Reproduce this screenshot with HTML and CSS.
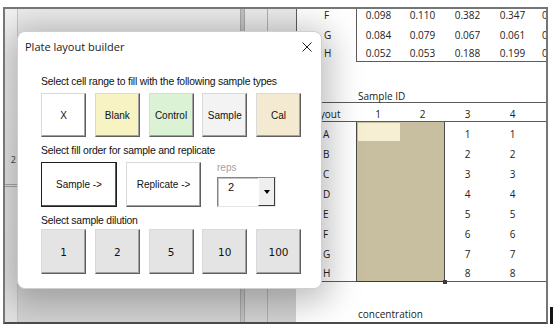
FILE: index.html
```html
<!DOCTYPE html>
<html>
<head>
<meta charset="utf-8">
<title>Plate layout builder</title>
<link rel="stylesheet" href="styles.css">
</head>
<body>
<div class="frame">
  <div class="sheet">
    <div class="left">
      <div class="gutter"><span class="rownum">2</span><span class="gline"></span></div>
      <div class="colA"></div>
      <div class="band"></div>
      <div class="colB"></div>
      <div class="colC"></div>
    </div>
    <div class="grid">
      <div class="row r-top top3"><div class="lbl">F</div><div class="v c1">0.098</div><div class="v">0.110</div><div class="v">0.382</div><div class="v">0.347</div><div class="c5">0</div></div>
      <div class="row r-mid top3"><div class="lbl">G</div><div class="v c1">0.084</div><div class="v">0.079</div><div class="v">0.067</div><div class="v">0.061</div><div class="c5">0</div></div>
      <div class="row r-mid top3 line-b"><div class="lbl nob">H</div><div class="v c1">0.052</div><div class="v">0.053</div><div class="v">0.188</div><div class="v">0.199</div><div class="c5">0</div></div>
      <div class="row"><div></div><div></div><div></div><div></div><div></div><div></div></div>
      <div class="row r-bot0 line-all"><div></div><div class="txt">Sample ID</div><div></div><div></div><div></div><div></div></div>
      <div class="row r-bot1 line-all"><div class="lbl layout">Layout</div><div class="v">1</div><div class="v">2</div><div class="v">3</div><div class="v">4</div><div></div></div>
      <div class="row r-bot2"><div class="lbl">A</div><div class="sel s1 active"></div><div class="sel s2"></div><div class="v">1</div><div class="v">1</div><div></div></div>
      <div class="row r-bot2"><div class="lbl">B</div><div class="sel s1"></div><div class="sel s2"></div><div class="v">2</div><div class="v">2</div><div></div></div>
      <div class="row r-bot2"><div class="lbl">C</div><div class="sel s1"></div><div class="sel s2"></div><div class="v">3</div><div class="v">3</div><div></div></div>
      <div class="row r-bot2"><div class="lbl">D</div><div class="sel s1"></div><div class="sel s2"></div><div class="v">4</div><div class="v">4</div><div></div></div>
      <div class="row r-bot2"><div class="lbl">E</div><div class="sel s1"></div><div class="sel s2"></div><div class="v">5</div><div class="v">5</div><div></div></div>
      <div class="row r-bot2"><div class="lbl">F</div><div class="sel s1"></div><div class="sel s2"></div><div class="v">6</div><div class="v">6</div><div></div></div>
      <div class="row r-bot2"><div class="lbl">G</div><div class="sel s1"></div><div class="sel s2"></div><div class="v">7</div><div class="v">7</div><div></div></div>
      <div class="row r-bot2 line-all last"><div class="lbl">H</div><div class="sel s1"></div><div class="sel s2 handle"></div><div class="v">8</div><div class="v">8</div><div></div></div>
      <div class="row"><div></div><div></div><div></div><div></div><div></div><div></div></div>
      <div class="row r-mid"><div></div><div class="txt">concentration</div><div></div><div></div><div></div><div></div></div>
    </div>
  </div>

  <div class="dialog">
    <div class="dlg-head">
      <span class="dlg-title">Plate layout builder</span>
      <svg class="close" width="10" height="10" viewBox="0 0 10 10"><path d="M0.5 0.5L9.5 9.5M9.5 0.5L0.5 9.5" stroke="#222" stroke-width="1" fill="none"/></svg>
    </div>
    <div class="dlg-body">
      <div class="label first">Select cell range to fill with the following sample types</div>
      <div class="btn-row">
        <div class="btn b-x">X</div>
        <div class="btn b-blank">Blank</div>
        <div class="btn b-control">Control</div>
        <div class="btn b-sample">Sample</div>
        <div class="btn b-cal">Cal</div>
      </div>
      <div class="label">Select fill order for sample and replicate</div>
      <div class="btn-row order">
        <div class="btn wide default">Sample -&gt;</div>
        <div class="btn wide b-x">Replicate -&gt;</div>
        <div class="reps">
          <div class="reps-label">reps</div>
          <div class="combo">
            <span class="combo-val">2</span>
            <span class="combo-btn"><span class="tri"></span></span>
          </div>
        </div>
      </div>
      <div class="label">Select sample dilution</div>
      <div class="btn-row dil">
        <div class="btn b-dil">1</div>
        <div class="btn b-dil">2</div>
        <div class="btn b-dil">5</div>
        <div class="btn b-dil">10</div>
        <div class="btn b-dil">100</div>
      </div>
    </div>
  </div>
</div>
<div class="edge"></div>
</body>
</html>
```

FILE: styles.css
```css
html, body { margin: 0; padding: 0; background: #fff; }
body {
  display: flex;
  align-items: flex-start;
  padding: 7px 0 0 3px;
  gap: 2px;
}
.edge { width: 3px; height: 17px; background: #151515; margin-top: 300px; }

.frame {
  position: relative;
  width: 541px;
  height: 313px;
  border: 2px solid #767676;
  border-bottom-color: #4a4a4a;
  overflow: hidden;
  background: #fff;
}
.sheet { display: flex; height: 313px; }

/* left, greyed-out part of the worksheet */
.left {
  width: 291px;
  display: flex;
  background: linear-gradient(180deg, #ececec 0%, #dedede 45%, #d3d3d3 100%);
}
.gutter {
  width: 12px;
  border-right: 1px solid #c6c6c6;
  background: rgba(255,255,255,0.35);
  display: flex;
  flex-direction: column;
  align-items: flex-end;
  font: 9px "Open Sans", sans-serif;
  color: #444;
}
.rownum { margin-top: 145px; line-height: 12px; padding-right: 1px; }
.gline { align-self: stretch; margin-top: 18px; height: 1px; border-top: 1px solid #a8a8a8; border-bottom: 1px solid #a8a8a8; }
.colA { width: 222px; }
.band { width: 3px; background: #c3c3c3; border-left: 1px solid #a9a9a9; border-right: 1px solid #a9a9a9; }
.colB { width: 22px; border-right: 1px solid #b0b0b0; }
.colC { width: 28px; }

/* right worksheet grid */
.grid {
  width: 250px;
  display: grid;
  grid-template-columns: 60px 44px 45px 45px 45px 11px;
  grid-template-rows: 16px 19px 18px 21px 20px 19px repeat(8, 20px) 23px 17px;
  font: 10px "Open Sans", sans-serif;
  color: #222;
}
.row { display: contents; }
.row > div {
  box-sizing: border-box;
  display: flex;
  align-items: flex-end;
  line-height: 12px;
  white-space: nowrap;
  min-width: 0;
}
.r-top > div { align-items: flex-start; }
.r-mid > div { align-items: center; }
.r-bot0 > div { padding-bottom: 0; }
.r-bot1 > div { padding-bottom: 1px; }
.r-bot2 > div { padding-bottom: 2px; }

.v { justify-content: center; }
.lbl { padding-left: 27px; }
.lbl.layout { padding-left: 13px; }
.txt { padding-left: 2px; }
.c5 { overflow: hidden; padding-left: 7px; }

.top3 > .lbl { border-left: 1px solid #5c5c5c; }
.top3 > .c1 { border-left: 1px solid #5c5c5c; }
.line-b > div:not(.nob) { border-bottom: 1px solid #5c5c5c; }
.line-all > div { border-bottom: 1px solid #5c5c5c; }

/* selected range */
.sel { background: #c8bfa0; }
.s1 { border-left: 1px solid #4a4a4a; }
.s2 { border-right: 1px solid #4a4a4a; }
.last > .sel { border-bottom: 1px solid #3a3a3a; }
.active { box-shadow: inset 1px 1px 0 #c8bfa0, inset 0 -1px 0 #c8bfa0; background: #f7efd3; }
.handle { position: relative; }
.handle::after {
  content: "";
  position: absolute;
  right: -3px;
  bottom: -3px;
  width: 4px;
  height: 4px;
  background: #3a3a3a;
}

/* dialog */
.dialog {
  position: absolute;
  left: 12px;
  top: 22px;
  width: 305px;
  box-sizing: border-box;
  background: #fff;
  border: 1px solid #cfcfcf;
  border-radius: 8px;
  box-shadow: 0 6px 34px 8px rgba(0,0,0,0.26);
  z-index: 2;
  font-family: "Liberation Sans", Arial, sans-serif;
  color: #111;
}
.dlg-head {
  height: 29px;
  display: flex;
  align-items: center;
  justify-content: space-between;
  padding: 0 9px 0 7px;
}
.dlg-title { font: 11px "Open Sans", sans-serif; color: #1a1a1a; }
.close { display: block; }
.dlg-body { padding: 0 0 14px 23px; }
.label { font-size: 10.4px; letter-spacing: -0.2px; line-height: 14px; margin-top: 7px; }
.label.first { margin-top: 14px; }
.btn-row { display: flex; gap: 8.75px; margin-top: 4px; }
.btn-row.dil { margin-top: 1px; }
.btn-row.order { gap: 9px; align-items: flex-start; }

.btn {
  width: 45px;
  height: 44px;
  box-sizing: border-box;
  display: flex;
  align-items: center;
  justify-content: center;
  border: 1px solid;
  border-color: #d9d9d9 #5f5f5f #5f5f5f #d9d9d9;
  box-shadow: inset -1px -1px 0 #a2a2a2;
  font-size: 10px;
}
.b-x { background: #fff; }
.b-blank { background: #f7f3c3; }
.b-control { background: #dbf2d5; }
.b-sample { background: #f3f3f3; }
.b-cal { background: #f4ead1; }
.btn.wide { width: 75px; height: 45px; }
.btn.default {
  width: 76px;
  background: #fff;
  border-color: #1e1e1e;
  box-shadow: inset -1px -1px 0 #5a5a5a;
}
.b-dil { background: #e4e4e4; font: 10.5px "DejaVu Sans", sans-serif; height: 45px; }

.reps { width: 59px; margin-left: 7px; }
.reps-label { font-size: 10px; line-height: 12px; color: #a3a3a3; }
.combo {
  margin-top: 3px;
  height: 30px;
  box-sizing: border-box;
  display: flex;
  border: 1px solid;
  border-color: #848484 #e6e6e6 #e6e6e6 #848484;
  box-shadow: inset 1px 1px 0 #c4c4c4;
}
.combo-val { flex: 1; font-size: 11px; line-height: 12px; padding: 3px 0 0 10px; }
.combo-btn {
  width: 17px;
  box-sizing: border-box;
  background: #efefef;
  border-right: 1px solid #3c3c3c;
  border-bottom: 1px solid #3c3c3c;
  border-left: 1px solid #fff;
  display: flex;
  align-items: center;
  justify-content: center;
}
.tri {
  width: 0;
  height: 0;
  border-left: 3px solid transparent;
  border-right: 3px solid transparent;
  border-top: 4px solid #000;
}
```
